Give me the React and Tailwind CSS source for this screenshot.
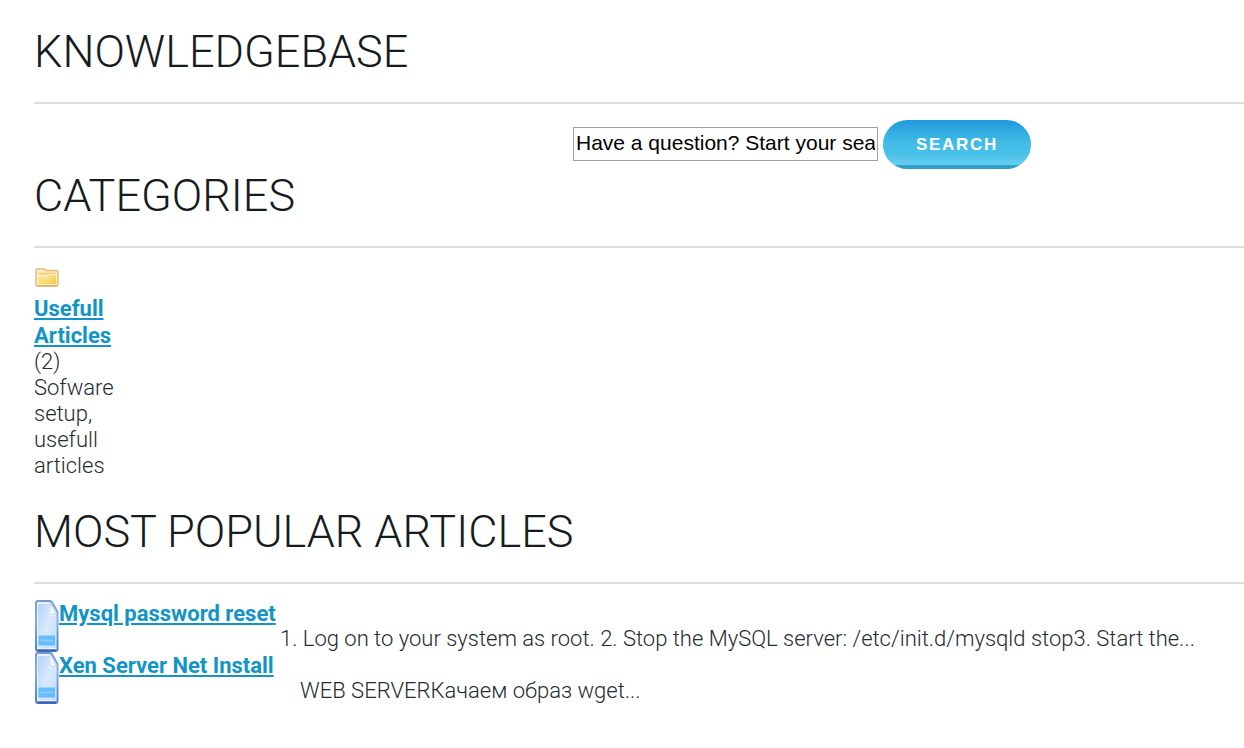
function Folder() {
  return (
    <svg className="mb-[5px] block h-[26px] w-[26px]" viewBox="0 0 26 26" aria-hidden="true">
      <defs>
        <linearGradient id="fold" x1="0" y1="0" x2="1" y2="1">
          <stop offset="0" stopColor="#fbe9a4" />
          <stop offset="0.5" stopColor="#f9dc74" />
          <stop offset="1" stopColor="#f5c93e" />
        </linearGradient>
      </defs>
      <path d="M2 6.5 Q2 5 3.5 5 H10 Q11.5 5 12 6.5 H22.5 Q24 6.500 24 8 V20.500 Q24 22 22.500 22 H3.500 Q2 22 2 20.500Z" fill="#fdf0c8" stroke="#e8b676" strokeWidth="1.400" />
      <path d="M4.500 8.500 H21.500 V11 H4.500Z" fill="#f5d283" />
      <path d="M4 12.500 H12 L14 10.500 H22.500 V20.500 H4Z" fill="url(#fold)" stroke="#fff3c4" strokeWidth="0.800" />
      <path d="M3 21.700H23" stroke="#e5a860" strokeWidth="1.300" />
    </svg>
  );
}

function Doc() {
  return (
    <svg className="block h-[52px] w-[25px] shrink-0" viewBox="0 0 25 52" aria-hidden="true">
      <defs>
        <linearGradient id="doc" x1="0" y1="0" x2="1" y2="1">
          <stop offset="0" stopColor="#b4d3f7" />
          <stop offset="0.5" stopColor="#d9e9fc" />
          <stop offset="1" stopColor="#c3ddfb" />
        </linearGradient>
        <linearGradient id="docEdge" x1="0" y1="0" x2="0" y2="1">
          <stop offset="0" stopColor="#7299d0" />
          <stop offset="0.35" stopColor="#86aee6" />
          <stop offset="1" stopColor="#4d82cf" />
        </linearGradient>
      </defs>
      <path d="M2 3 Q2 1 4 1 H16.500 Q18 1.500 19 4 L23.500 12 V49 Q23.500 51 21.500 51 H4 Q2 51 2 49Z" fill="#eaf3ff" stroke="url(#docEdge)" strokeWidth="2" strokeLinejoin="round" />
      <path d="M4 4 H15 V16 H22 V48 H4Z" fill="url(#doc)" />
      <path d="M16 2.500 L22.500 14.500 H18 Q16 14.500 16 12Z" fill="#f7fbff" stroke="#a9c9f0" strokeWidth="0.700" />
      <path d="M4.500 35.500H21V45.500H4.500Z" fill="#66bdfb" />
      <path d="M6.500 40.500H19" stroke="#8accfd" strokeWidth="2" />
      <path d="M3.500 50.500H22" stroke="#3a66b4" strokeWidth="2.500" />
    </svg>
  );
}

function Title({ children }) {
  return (
    <h1 className="border-b-2 border-[#dddddd] pb-[23px] text-[45px] leading-[54px] font-light text-[#161c1e]">{children}</h1>
  );
}

const link = "block leading-[27px] font-bold text-[#1295c6] underline";

export default function App() {
  return (
    <main className="overflow-x-hidden bg-white pt-[25px] pb-11 pl-[34px] font-[Roboto,sans-serif] text-[22px] leading-[26px] font-light text-[#232c30]">
      <Title>KNOWLEDGEBASE</Title>
      <form className="mt-4 flex items-center justify-center gap-[5px] pl-[326px]" onSubmit={(e) => e.preventDefault()}>
        <input
          aria-label="Search the knowledgebase"
          defaultValue="Have a question? Start your search here."
          className="mb-0.5 h-[34px] w-[305px] border border-[#a0a0a0] px-0.5 pb-0.5 font-['Liberation_Sans',sans-serif] text-[21px] font-normal text-black"
        />
        <button className="h-[49px] w-[148px] rounded-full bg-[linear-gradient(to_bottom,#2199dc_0px,#3fbbe6_22px,#48c1e8_34px,#66cff0_45px,#35a6ce_45px,#2c9ac4_49px)] font-['Liberation_Sans',sans-serif] text-[17px] font-bold tracking-widest text-white">
          SEARCH
        </button>
      </form>
      <Title>CATEGORIES</Title>
      <section className="mt-4 w-[84px]">
        <Folder />
        <a href="#usefull" className={link}>Usefull Articles</a>
        <p>(2)</p>
        <p>Sofware setup, usefull articles</p>
      </section>
      <div className="mt-[26px]">
        <Title>MOST POPULAR ARTICLES</Title>
      </div>
      <section className="mt-4">
        <article className="flex">
          <Doc />
          <a href="#mysql" className={`${link} min-w-[221px]`}>Mysql password reset</a>
          <p className="pt-[26px]">1. Log on to your system as root. 2. Stop the MySQL server: /etc/init.d/mysqld stop3. Start the...</p>
        </article>
        <article className="flex">
          <Doc />
          <a href="#xen" className={`${link} min-w-[221px]`}>Xen Server Net Install</a>
          <p className="pt-[26px] pl-5">WEB SERVERКачаем образ wget...</p>
        </article>
      </section>
    </main>
  );
}
